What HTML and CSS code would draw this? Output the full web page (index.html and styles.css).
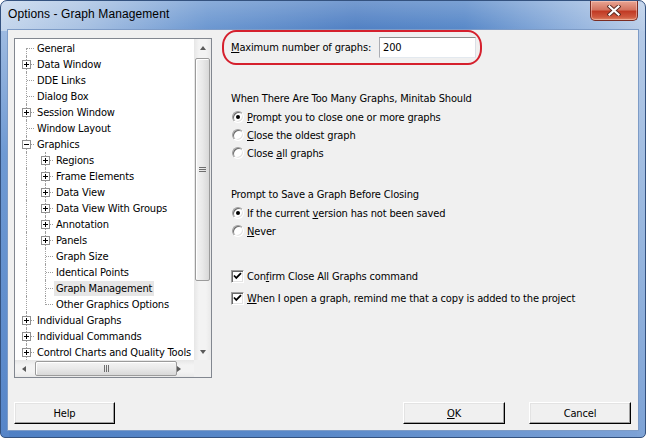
FILE: index.html
```html
<!DOCTYPE html>
<html>
<head>
<meta charset="utf-8">
<title>Options - Graph Management</title>
<link rel="stylesheet" href="styles.css">
</head>
<body>
<div class="window">
  <div class="titlebar">
    <span class="title">Options - Graph Management</span>
    <div class="close">
      <svg width="14" height="11" viewBox="0 0 14 11"><path d="M2.5 1.5 L11.5 9.5 M11.5 1.5 L2.5 9.5" stroke="#5a2a22" stroke-width="4" stroke-linecap="square" fill="none"/><path d="M2.5 1.5 L11.5 9.5 M11.5 1.5 L2.5 9.5" stroke="#fff" stroke-width="2.2" stroke-linecap="square" fill="none"/></svg>
    </div>
  </div>
  <div class="client">
    <div class="main">
      <div class="tree">
        <div class="tree-content">
          <div class="row"><span class="cell first"></span><span class="lbl">General</span></div>
          <div class="row"><span class="cell tee"><span class="exp"></span></span><span class="lbl">Data Window</span></div>
          <div class="row"><span class="cell tee"></span><span class="lbl">DDE Links</span></div>
          <div class="row"><span class="cell tee"></span><span class="lbl">Dialog Box</span></div>
          <div class="row"><span class="cell tee"><span class="exp"></span></span><span class="lbl">Session Window</span></div>
          <div class="row"><span class="cell tee"></span><span class="lbl">Window Layout</span></div>
          <div class="row"><span class="cell tee"><span class="exp minus"></span></span><span class="lbl">Graphics</span></div>
          <div class="row"><span class="cell pipe"></span><span class="cell tee"><span class="exp"></span></span><span class="lbl">Regions</span></div>
          <div class="row"><span class="cell pipe"></span><span class="cell tee"><span class="exp"></span></span><span class="lbl">Frame Elements</span></div>
          <div class="row"><span class="cell pipe"></span><span class="cell tee"><span class="exp"></span></span><span class="lbl">Data View</span></div>
          <div class="row"><span class="cell pipe"></span><span class="cell tee"><span class="exp"></span></span><span class="lbl">Data View With Groups</span></div>
          <div class="row"><span class="cell pipe"></span><span class="cell tee"><span class="exp"></span></span><span class="lbl">Annotation</span></div>
          <div class="row"><span class="cell pipe"></span><span class="cell tee"><span class="exp"></span></span><span class="lbl">Panels</span></div>
          <div class="row"><span class="cell pipe"></span><span class="cell tee"></span><span class="lbl">Graph Size</span></div>
          <div class="row"><span class="cell pipe"></span><span class="cell tee"></span><span class="lbl">Identical Points</span></div>
          <div class="row"><span class="cell pipe"></span><span class="cell tee"></span><span class="lbl selected">Graph Management</span></div>
          <div class="row"><span class="cell pipe"></span><span class="cell last"></span><span class="lbl">Other Graphics Options</span></div>
          <div class="row"><span class="cell tee"><span class="exp"></span></span><span class="lbl">Individual Graphs</span></div>
          <div class="row"><span class="cell tee"><span class="exp"></span></span><span class="lbl">Individual Commands</span></div>
          <div class="row"><span class="cell tee"><span class="exp"></span></span><span class="lbl">Control Charts and Quality Tools</span></div>
        </div>
        <div class="vscroll">
          <div class="sbtn"><span class="arrow up"></span></div>
          <div class="vtrack"><div class="vthumb"><span class="vgrip"></span></div></div>
          <div class="sbtn"><span class="arrow down"></span></div>
        </div>
        <div class="hscroll">
          <div class="sbtn"><span class="arrow left"></span></div>
          <div class="htrack"><div class="hthumb"><span class="hgrip"></span></div></div>
          <div class="sbtn"><span class="arrow right"></span></div>
        </div>
        <div class="corner"></div>
      </div>
      <div class="right">
        <div class="highlight">
          <span><u>M</u>aximum number of graphs:</span>
          <div class="textbox">200</div>
        </div>
        <div class="heading first-heading">When There Are Too Many Graphs, Minitab Should</div>
        <div class="opt"><span class="radio on"></span><span><u>P</u>rompt you to close one or more graphs</span></div>
        <div class="opt"><span class="radio"></span><span><u>C</u>lose the oldest graph</span></div>
        <div class="opt"><span class="radio"></span><span>Close <u>a</u>ll graphs</span></div>
        <div class="heading second-heading">Prompt to Save a Graph Before Closing</div>
        <div class="opt"><span class="radio on"></span><span>If the current <u>v</u>ersion has not been saved</span></div>
        <div class="opt"><span class="radio"></span><span><u>N</u>ever</span></div>
        <div class="chk first-chk"><span class="checkbox"><svg width="9" height="9" viewBox="0 0 9 9"><path d="M1 3.5 L3.3 6 L8 1.2" stroke="#000" stroke-width="1.8" fill="none"/></svg></span><span>Con<u>f</u>irm Close All Graphs command</span></div>
        <div class="chk"><span class="checkbox"><svg width="9" height="9" viewBox="0 0 9 9"><path d="M1 3.5 L3.3 6 L8 1.2" stroke="#000" stroke-width="1.8" fill="none"/></svg></span><span><u>W</u>hen I open a graph, remind me that a copy is added to the project</span></div>
      </div>
    </div>
    <div class="buttons">
      <div class="btn help">Help</div>
      <div class="btn ok"><u>O</u>K</div>
      <div class="btn cancel">Cancel</div>
    </div>
  </div>
</div>
</body>
</html>
```
FILE: styles.css
```css
* { box-sizing: border-box; }
html, body { margin: 0; padding: 0; background: #ffffff; }
body {
  width: 646px;
  height: 438px;
  overflow: hidden;
  font-family: "DejaVu Sans Condensed", "DejaVu Sans", sans-serif;
  font-size: 11px;
  letter-spacing: -0.15px;
  color: #000;
}
u { text-decoration: underline; text-underline-offset: 1px; }

.window {
  width: 646px;
  height: 438px;
  border: 1px solid #34527f;
  border-radius: 7px 7px 5px 5px;
  padding: 0 7px 7px 7px;
  display: flex;
  flex-direction: column;
  background:
    linear-gradient(to bottom, rgba(255,255,255,0.22) 0px, rgba(255,255,255,0) 30px) top / 100% 30px no-repeat,
    linear-gradient(to right, #c4d6ec 0%, #a9c2e3 12%, #6a96d0 32%, #4f7fc3 55%, #5687c8 72%, #8fb0dc 88%, #b9cde8 100%) top / 100% 30px no-repeat,
    linear-gradient(to bottom, #a9c2e4 0%, #6f9ad3 35%, #5685c8 100%) left / 8px 100% no-repeat,
    linear-gradient(to bottom, #b9cde8 0%, #9ab8df 50%, #7ea3d6 100%) right / 8px 100% no-repeat,
    linear-gradient(to right, #4f80c4 0%, #5a89c9 50%, #7da2d6 100%);
}

.titlebar {
  height: 29px;
  display: flex;
  justify-content: space-between;
  align-items: flex-start;
}
.title {
  font-family: "Liberation Sans", "DejaVu Sans", sans-serif;
  font-size: 12px;
  letter-spacing: 0.1px;
  line-height: 27px;
  color: #000;
}
.close {
  width: 48px;
  height: 20px;
  border: 1px solid #7a2c22;
  border-top: none;
  border-radius: 0 0 5px 5px;
  background: linear-gradient(to bottom, #e9a593 0%, #d47561 45%, #c13b25 55%, #cf5a40 85%, #e08a6a 100%);
  box-shadow: inset 0 0 0 1px rgba(255,220,210,0.45);
  display: flex;
  align-items: center;
  justify-content: center;
}

.client {
  height: 400px;
  background: #f0f0f0;
  box-shadow: 0 0 0 1px #7d9bc6;
  padding: 0 7px 6px 6px;
  display: flex;
  flex-direction: column;
}
.main {
  height: 348px;
  display: flex;
  gap: 10px;
}

/* Tree */
.tree {
  margin-top: 8px;
  width: 198px;
  height: 340px;
  border: 1px solid #828790;
  background: #fff;
  display: grid;
  grid-template-columns: 179px 17px;
  grid-template-rows: 321px 17px;
}
.tree-content {
  padding-top: 1px;
  overflow: hidden;
  white-space: nowrap;
}
.row {
  height: 16px;
  display: flex;
  align-items: center;
}
.cell {
  width: 19px;
  height: 16px;
  flex: none;
  position: relative;
}
.cell::before, .cell::after { content: ""; position: absolute; }
.pipe::before, .tee::before {
  left: 11px; top: 0; height: 16px;
  border-left: 1px dotted #a0a0a0;
}
.first::before {
  left: 11px; top: 8px; height: 8px;
  border-left: 1px dotted #a0a0a0;
}
.last::before {
  left: 11px; top: 0; height: 9px;
  border-left: 1px dotted #a0a0a0;
}
.tee::after, .first::after, .last::after {
  left: 12px; top: 8px; width: 7px;
  border-top: 1px dotted #a0a0a0;
}
.exp {
  position: absolute;
  left: 7px; top: 4px;
  width: 9px; height: 9px;
  border: 1px solid #919191;
  background: #fff;
  z-index: 1;
}
.exp::before {
  content: ""; position: absolute;
  left: 1px; top: 3px; width: 5px; height: 1px;
  background: #000;
}
.exp::after {
  content: ""; position: absolute;
  left: 3px; top: 1px; width: 1px; height: 5px;
  background: #000;
}
.exp.minus::after { display: none; }
.lbl {
  margin-left: 1px;
  padding: 1px 2px;
  line-height: 13px;
}
.lbl.selected { background: #e6e6e6; }

/* scrollbars */
.vscroll {
  display: flex;
  flex-direction: column;
  background: linear-gradient(to right, #e6e6e6, #f3f3f3 30%, #f3f3f3 70%, #e9e9e9);
}
.hscroll {
  display: flex;
  background: linear-gradient(to bottom, #e6e6e6, #f3f3f3 30%, #f3f3f3 70%, #e9e9e9);
}
.corner { background: #f0f0f0; }
.sbtn {
  width: 17px; height: 17px;
  flex: none;
  display: flex;
  align-items: center;
  justify-content: center;
}
.arrow { width: 0; height: 0; }
.arrow.up { border-left: 3.5px solid transparent; border-right: 3.5px solid transparent; border-bottom: 4px solid #5a5a5a; }
.arrow.down { border-left: 3.5px solid transparent; border-right: 3.5px solid transparent; border-top: 4px solid #5a5a5a; }
.arrow.left { border-top: 3.5px solid transparent; border-bottom: 3.5px solid transparent; border-right: 4px solid #5a5a5a; }
.arrow.right { border-top: 3.5px solid transparent; border-bottom: 3.5px solid transparent; border-left: 4px solid #5a5a5a; }
.vtrack { flex: 1; padding: 2px 1px 0 1px; }
.vthumb {
  height: 223px;
  border: 1px solid #9b9b9b;
  border-radius: 2px;
  background: linear-gradient(to right, #f4f4f4, #e9e9e9 50%, #d8d8d8);
  box-shadow: inset 1px 1px 0 #fff;
  display: flex;
  align-items: center;
  justify-content: center;
}
.vgrip {
  width: 7px; height: 5px;
  background: repeating-linear-gradient(to bottom, #6e6e6e 0 1px, transparent 1px 2px);
}
.htrack { flex: 1; display: flex; padding: 1px 0 1px 3px; }
.hthumb {
  flex: 1;
  border: 1px solid #9b9b9b;
  border-radius: 2px;
  background: linear-gradient(to bottom, #f4f4f4, #e9e9e9 50%, #d8d8d8);
  box-shadow: inset 1px 1px 0 #fff;
  display: flex;
  align-items: center;
  justify-content: center;
}
.hgrip {
  width: 5px; height: 7px;
  background: repeating-linear-gradient(to right, #6e6e6e 0 1px, transparent 1px 2px);
}

/* Right panel */
.right { flex: 1; display: flex; flex-direction: column; }
.highlight {
  width: 260px;
  height: 35px;
  border: 2px solid #d5202d;
  border-radius: 14px / 16px;
  padding: 0 4px 0 7px;
  display: flex;
  align-items: center;
  justify-content: space-between;
}
.textbox {
  width: 97px;
  height: 21px;
  background: #fff;
  border: 1px solid;
  border-color: #8e8f8f #dbdfe6 #e3e9ef #abadb3;
  padding-left: 3px;
  line-height: 19px;
}
.heading { height: 18px; line-height: 18px; padding-left: 9px; }
.first-heading { margin-top: 25px; }
.second-heading { margin-top: 24px; }
.opt {
  height: 18px;
  display: flex;
  align-items: center;
  padding-left: 10px;
  gap: 3px;
}
.radio {
  width: 12px; height: 12px;
  flex: none;
  border-radius: 50%;
  background: #fff;
  border: 1px solid;
  border-color: #a0a0a0 #ffffff #ffffff #a0a0a0;
  box-shadow: inset 1px 1px 0 #6c6c6c, inset -1px -1px 0 #e3e3e3;
  position: relative;
}
.radio.on::after {
  content: "";
  position: absolute;
  left: 3px; top: 3px;
  width: 4px; height: 4px;
  border-radius: 50%;
  background: #000;
}
.chk {
  height: 22px;
  display: flex;
  align-items: center;
  padding-left: 9px;
  gap: 3px;
}
.first-chk { margin-top: 25px; }
.checkbox {
  width: 13px; height: 13px;
  flex: none;
  background: #fff;
  border: 1px solid;
  border-color: #a0a0a0 #ffffff #ffffff #a0a0a0;
  box-shadow: inset 1px 1px 0 #696969, inset -1px -1px 0 #e3e3e3;
  display: flex;
  align-items: center;
  justify-content: center;
}

/* Buttons */
.buttons {
  margin-top: 24px;
  height: 22px;
  display: flex;
}
.btn {
  height: 22px;
  width: 102px;
  background: #f0f0f0;
  border: 1px solid;
  border-color: #ffffff #000000 #000000 #ffffff;
  box-shadow: inset -1px -1px 0 #a0a0a0, inset 1px 1px 0 #e3e3e3;
  display: flex;
  align-items: center;
  justify-content: center;
}
.help { width: 101px; }
.ok { margin-left: auto; margin-right: 24px; }
```
